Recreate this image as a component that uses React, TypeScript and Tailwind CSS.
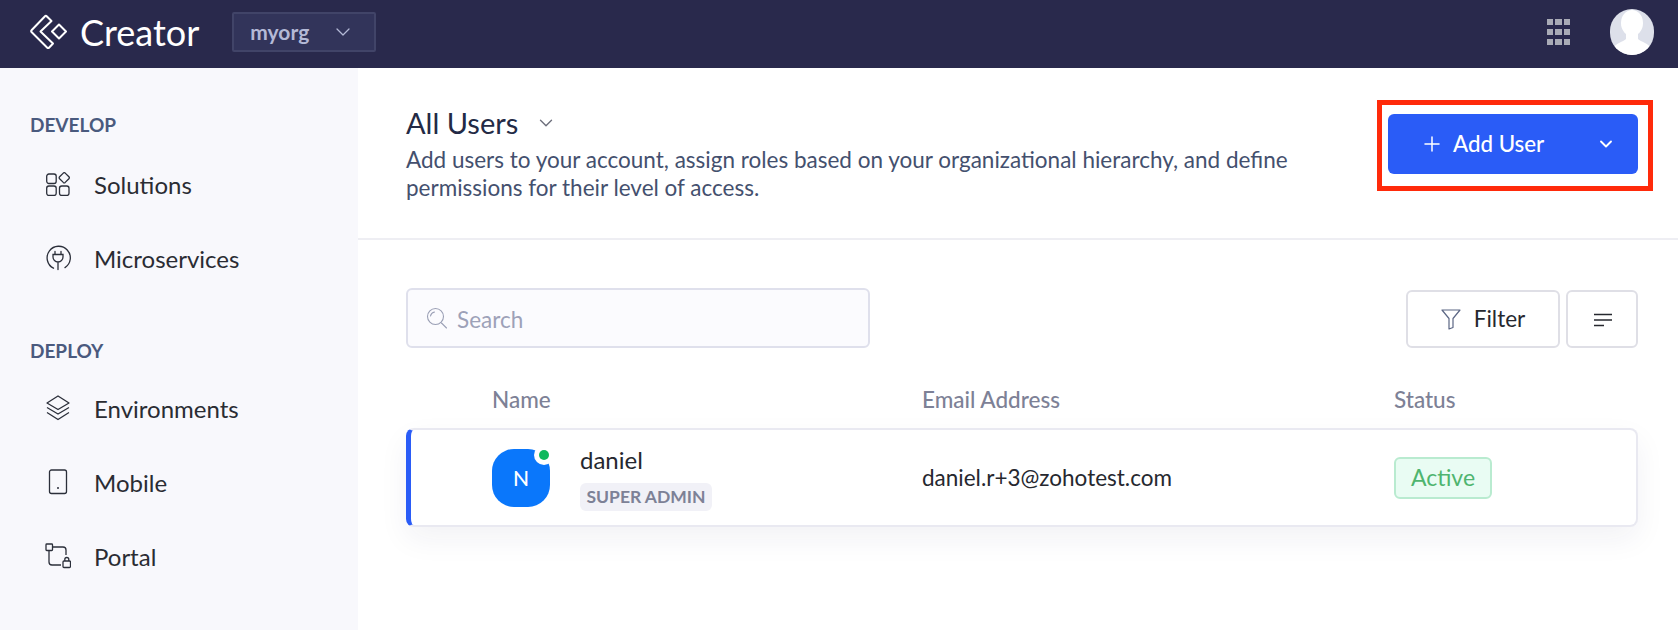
import React from 'react';
import { ChevronDown, Plus } from 'lucide-react';

const sections = [
  {
    title: 'DEVELOP',
    items: [
      { label: 'Solutions', icon: <SolutionsIcon /> },
      { label: 'Microservices', icon: <PlugIcon /> },
    ],
  },
  {
    title: 'DEPLOY',
    items: [
      { label: 'Environments', icon: <LayersIcon /> },
      { label: 'Mobile', icon: <MobileIcon /> },
      { label: 'Portal', icon: <PortalIcon /> },
    ],
  },
];

function SolutionsIcon() {
  return (
    <svg width="24" height="24" viewBox="0 0 24 24" fill="none" stroke="#2b2f3a" strokeWidth="1.300">
      <rect x="0.700" y="2" width="9.500" height="9.500" rx="2.200" />
      <rect x="0.700" y="14" width="9.500" height="9.500" rx="2.200" />
      <rect x="13.500" y="14" width="9.500" height="9.500" rx="2.200" />
      <path d="M17.300 1.100a1.400 1.400 0 0 1 1.900 0l3.700 3.700a1.400 1.400 0 0 1 0 1.900l-3.700 3.700a1.400 1.400 0 0 1-1.900 0l-3.700-3.700a1.400 1.400 0 0 1 0-1.900z" />
    </svg>
  );
}

function PlugIcon() {
  return (
    <svg width="26" height="26" viewBox="0 0 26 26" fill="none" stroke="#2b2f3a" strokeWidth="1.300" strokeLinecap="round">
      <path d="M8.500 23.200A11.600 11.600 0 1 1 20 22.600" />
      <path d="M10 6.500v3M16 6.500v3M8 9.500h10v2.500a5 5 0 0 1-10 0zM13 17v7.500" />
    </svg>
  );
}

function LayersIcon() {
  return (
    <svg width="24" height="26" viewBox="0 0 24 26" fill="none" stroke="#2b2f3a" strokeWidth="1.300" strokeLinejoin="round">
      <path d="M12 1 23 8 12 14.500 1 8z" />
      <path d="M1 12.500 12 19 23 12.500" />
      <path d="M1 17.500 12 24.500 23 17.500" />
    </svg>
  );
}

function MobileIcon() {
  return (
    <svg width="24" height="26" viewBox="0 0 24 26" fill="none" stroke="#2b2f3a" strokeWidth="1.300">
      <rect x="3.500" y="1" width="17" height="23.500" rx="2" />
      <circle cx="12" cy="19" r="1" fill="#2b2f3a" stroke="none" />
    </svg>
  );
}

function PortalIcon() {
  return (
    <svg width="26" height="26" viewBox="0 0 26 26" fill="none" stroke="#2b2f3a" strokeWidth="1.300">
      <rect x="1" y="1" width="6.500" height="6.500" rx="0.800" />
      <path d="M8 4h10a3 3 0 0 1 3 3v5M4 8v11a3 3 0 0 0 3 3h9" />
      <rect x="18" y="18" width="7.500" height="6.500" rx="1" />
      <path d="M19.800 18v-1.500a2 2 0 0 1 4 0V18" />
    </svg>
  );
}

function CreatorLogo() {
  return (
    <svg width="37" height="36" viewBox="0 0 37 36" fill="none" stroke="#fff" strokeWidth="2" strokeLinejoin="round">
      <path d="M15 2.200a1.200 1.200 0 0 1 1.700 0L21.500 7 10.500 17.500l12.500 12-4 4.200a1.200 1.200 0 0 1-1.700 0L1.500 18a1.200 1.200 0 0 1 0-1.700z" />
      <path d="M29 10.500 36 17.500 29 24.500 22 17.500z" />
    </svg>
  );
}

function AppsGrid() {
  return (
    <div className="grid grid-cols-3 gap-x-[2px] gap-y-[4px]">
      {Array.from({ length: 9 }).map((_, i) => (
        <div key={i} className="w-[6.500px] h-[6px] bg-[#a9abb6]" />
      ))}
    </div>
  );
}

function UserPhoto() {
  return (
    <div className="w-[44px] h-[46px] rounded-full bg-[#dde0ea] overflow-hidden">
      <svg width="44" height="46" viewBox="0 0 44 46">
        <ellipse cx="22" cy="14" rx="11" ry="13" fill="#fff" />
        <path d="M16 24h12v6c3 3 10 4 13 9v7H3v-7c3-5 10-6 13-9z" fill="#fff" />
      </svg>
    </div>
  );
}

function FilterIcon() {
  return (
    <svg width="20" height="22" viewBox="0 0 20 22" fill="none" stroke="#5b6684" strokeWidth="1.200" strokeLinejoin="round">
      <path d="M1 2h18l-7 8.500v9l-4 1.500V10.500z" />
    </svg>
  );
}

function SearchIcon() {
  return (
    <svg width="22" height="22" viewBox="0 0 22 22" fill="none" stroke="#9a9fb5" strokeWidth="1.100" strokeLinecap="round">
      <circle cx="9.500" cy="9.500" r="8" />
      <path d="M15.500 16l5 5" />
      <path d="M4.500 9a5 5 0 0 1 4-4" />
    </svg>
  );
}

function Sidebar() {
  return (
    <aside className="w-[358px] shrink-0 bg-[#f8f8fc] pl-[30px] pt-[46px]">
      {sections.map((section, i) => (
        <div key={section.title} className="mb-[45px]">
          <div className="text-[19px] leading-[22px] font-bold text-[#4a5a7e]">{section.title}</div>
          <ul className={i === 0 ? 'mt-[11px]' : 'mt-[9px]'}>
            {section.items.map((item) => (
              <li key={item.label} className="h-[74px] flex items-center">
                <span className="w-[26px] ml-[15px] mr-[23px] flex justify-center">{item.icon}</span>
                <span className="mt-[2px] text-[24px] text-[#2a2c33]">{item.label}</span>
              </li>
            ))}
          </ul>
        </div>
      ))}
    </aside>
  );
}

export default function App() {
  return (
    <div className="w-[1678px] h-[630px] overflow-hidden flex flex-col bg-white font-['Lato',sans-serif]">
      <header className="h-[68px] shrink-0 bg-[#29294c] flex items-center pb-[4px] pl-[30px] pr-[24px]">
        <CreatorLogo />
        <span className="ml-[13px] text-[36px] text-white">Creator</span>
        <button className="ml-[33px] w-[144px] h-[40px] flex items-center justify-between pl-[16px] pr-[19px] bg-[#32345a] border-2 border-[#414468] rounded-[2px]">
          <span className="text-[21px] font-bold text-[#b4b9d6]">myorg</span>
          <ChevronDown className="w-[24px] h-[24px] text-[#b4b9d6]" strokeWidth={1.25} />
        </button>
        <div className="ml-auto flex items-center gap-[40px]">
          <AppsGrid />
          <UserPhoto />
        </div>
      </header>

      <div className="flex flex-1 min-h-0">
        <Sidebar />
        <main className="flex-1 min-w-0">
          <section className="h-[172px] border-b-2 border-[#eeeef3] pl-[48px] pr-[40px] flex justify-between">
            <div className="w-[900px] pt-[36px]">
              <div className="flex items-center">
                <h1 className="text-[29px] leading-[38px] text-[#232a45]">All Users</h1>
                <ChevronDown className="ml-[17px] w-[22px] h-[22px] text-[#6d6f7c]" strokeWidth={1.5} />
              </div>
              <p className="mt-[4px] text-[22.500px] leading-[28px] text-[#44506e]">
                Add users to your account, assign roles based on your organizational hierarchy, and define permissions for their level of access.
              </p>
            </div>
            <div className="relative mt-[46px] self-start">
              <button className="w-[250px] h-[60px] rounded-[6px] bg-[#2a5cf7] text-white flex items-center pl-[32px] pr-[22px]">
                <Plus className="w-[24px] h-[24px]" strokeWidth={1.5} />
                <span className="ml-[9px] text-[22.300px] font-medium">Add User</span>
                <ChevronDown className="ml-auto w-[20px] h-[20px]" strokeWidth={2.25} />
              </button>
              <div className="absolute top-[-14px] bottom-[-17px] left-[-11px] right-[-15px] border-[5px] border-[#ff2a0a]" />
            </div>
          </section>

          <section className="pl-[48px] pr-[40px] pt-[48px]">
            <div className="flex items-end justify-between">
              <label className="w-[464px] h-[60px] rounded-[6px] border-2 border-[#dfe0ec] bg-[#fbfbfe] flex items-center pl-[18px]">
                <SearchIcon />
                <span className="ml-[9px] mt-[4px] text-[22.500px] text-[#9da1b8]">Search</span>
              </label>
              <div className="flex gap-[6px]">
                <button className="w-[154px] h-[58px] rounded-[6px] border-2 border-[#dfdfe6] flex items-center justify-center gap-[13px]">
                  <FilterIcon />
                  <span className="text-[22.500px] text-[#26282f]">Filter</span>
                </button>
                <button className="w-[72px] h-[58px] rounded-[6px] border-2 border-[#dfdfe6] flex items-center justify-center">
                  <svg className="ml-[2px] mt-[1px]" width="18" height="14" viewBox="0 0 18 14" stroke="#26282f" strokeWidth="1.700">
                    <path d="M0 1.500h18M0 7h18M0 12.500h10" />
                  </svg>
                </button>
              </div>
            </div>

            <div className="mt-[39px] h-[42px] grid grid-cols-[516px_432px_1fr] items-start text-[22.500px] leading-[26px] text-[#7d8196] font-medium">
              <span className="pl-[86px]">Name</span>
              <span>Email Address</span>
              <span className="pl-[40px]">Status</span>
            </div>

            <div className="-mt-[1px] h-[99px] rounded-[8px] border-2 border-l-[5px] border-[#e9e9f1] border-l-[#2a5cf7] bg-white shadow-[0_12px_30px_rgba(40,40,80,0.06)] grid grid-cols-[511px_432px_1fr] items-center">
              <div className="flex items-center pl-[81px]">
                <div className="relative mt-[1px] w-[58px] h-[58px] rounded-[22px] bg-[#0a77fb] flex items-center justify-center text-white text-[21px] font-medium">
                  N
                  <span className="absolute top-[-4px] right-[-4px] w-[20px] h-[20px] rounded-full bg-white flex items-center justify-center">
                    <span className="w-[10px] h-[10px] rounded-full bg-[#10b85c]" />
                  </span>
                </div>
                <div className="ml-[30px] pt-[1px]">
                  <div className="text-[24px] leading-[30px] text-[#26282f]">daniel</div>
                  <div className="mt-[8px] h-[28px] w-[132px] rounded-[6px] bg-[#f1f1f7] text-[17.500px] leading-[28px] font-bold text-[#7d8196] text-center">
                    SUPER ADMIN
                  </div>
                </div>
              </div>
              <span className="text-[22.500px] text-[#26282f]">daniel.r+3@zohotest.com</span>
              <div className="pl-[40px]">
                <span className="inline-flex items-center justify-center w-[98px] h-[42px] rounded-[6px] border-2 border-[#b9ebd0] bg-[#e9fcf3] text-[23px] text-[#4fb56f]">
                  Active
                </span>
              </div>
            </div>
          </section>
        </main>
      </div>
    </div>
  );
}
